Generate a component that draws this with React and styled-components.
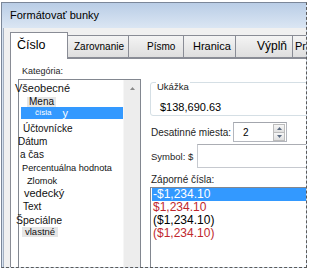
import React from 'react';
import styled, { createGlobalStyle } from 'styled-components';

const Global = createGlobalStyle`
  html, body { margin: 0; padding: 0; background: #fff; }
  body { font-family: "Liberation Sans", Arial, sans-serif; color: #000; }
`;

const Page = styled.div`
  width: 309px;
  height: 270px;
  box-sizing: border-box;
  padding: 2px 0 0 1px;
  background: #fff;
  overflow: hidden;
`;

const Frame = styled.div`
  width: 306px;
  height: 266px;
  box-sizing: border-box;
  border-left: 1px solid #7b8799;
  border-top: 1px solid #7b8799;
  border-right: 1px dashed #5a5a5a;
  border-bottom: 1px dashed #5a5a5a;
  background: #d7e3f1;
  display: flex;
  flex-direction: column;
  overflow: hidden;
`;

const TitleBar = styled.div`
  height: 25px;
  flex: none;
  padding-left: 8px;
  background: linear-gradient(#b9cde6, #dbe6f3);
  font-size: 11px;
  line-height: 25px;
  color: #000;
`;

const Body = styled.div`
  flex: 1;
  margin-left: 1px;
  border-left: 1px solid #a5b1c2;
  background: #f0f0f0;
  padding: 4px 0 0 6px;
  display: flex;
  flex-direction: column;
  min-height: 0;
`;

const TabRow = styled.div`
  display: flex;
  align-items: flex-end;
  height: 26px;
  flex: none;
`;

const Tab = styled.div`
  box-sizing: border-box;
  flex: none;
  width: ${p => p.$w}px;
  height: ${p => (p.$active ? 27 : 23)}px;
  margin-left: ${p => (p.$first ? 0 : -1)}px;
  margin-bottom: ${p => (p.$active ? -1 : 0)}px;
  border: 1px solid #898c95;
  border-bottom: ${p => (p.$active ? 'none' : '1px solid #898c95')};
  background: ${p => (p.$active ? '#fff' : 'linear-gradient(#f4f4f4, #dedede)')};
  padding-left: ${p => p.$pl}px;
  font-size: ${p => p.$size}px;
  line-height: ${p => (p.$active ? 24 : 21)}px;
  white-space: nowrap;
  overflow: hidden;
  position: relative;
  z-index: ${p => (p.$active ? 2 : 1)};
`;

const Panel = styled.div`
  flex: 1;
  background: #fff;
  border-top: 1px solid #898c95;
  border-left: 1px solid #898c95;
  display: grid;
  grid-template-columns: 139px 170px;
  align-items: start;
  min-height: 0;
`;

const LeftCol = styled.div`
  padding: 7px 0 0 7px;
`;

const SmallLabel = styled.div`
  font-size: 9px;
  line-height: 11px;
  margin-left: 4px;
  color: #1e1e1e;
`;

const ListBox = styled.div`
  margin-top: 2px;
  width: 123px;
  height: 200px;
  box-sizing: border-box;
  border: 1px solid #828790;
  display: flex;
`;

const Items = styled.div`
  flex: 1;
  min-width: 0;
`;

const Item = styled.div`
  height: ${p => p.$h}px;
  line-height: ${p => p.$h}px;
  margin-top: ${p => p.$mt || 0}px;
  margin-left: ${p => p.$x || 0}px;
  font-size: ${p => p.$size}px;
  white-space: nowrap;
  color: #111;
`;

const Chip = styled.span`
  display: inline-block;
  height: 100%;
  padding: 0 ${p => p.$pad}px;
  background: #e6e6e6;
`;

const SelItem = styled.div`
  height: 12px;
  margin-left: 2px;
  padding-left: 14px;
  background: #3399ff;
  color: #fff;
  white-space: nowrap;
  display: flex;
  align-items: center;
`;

const Tiny = styled.span`
  font-size: ${p => p.$size}px;
  margin-left: ${p => p.$ml || 0}px;
  line-height: 12px;
`;

const ScrollBar = styled.div`
  width: 17px;
  flex: none;
  background: #ededed;
  border-left: 1px solid #f6f6f6;
  display: flex;
  justify-content: center;
  padding-top: 7px;
  box-sizing: border-box;
`;

const RightCol = styled.div`
  display: flex;
  flex-direction: column;
  align-items: flex-start;
  padding-top: 23px;
`;

const Group = styled.div`
  position: relative;
  width: 170px;
  box-sizing: border-box;
  border: 1px solid #d5dfe5;
  border-radius: 3px;
  padding: 18px 0 1px 9px;
  font-size: 11px;
  line-height: 13px;
`;

const GroupLabel = styled.span`
  position: absolute;
  top: -2px;
  left: 5px;
  padding: 0 1px;
  background: #fff;
  font-size: 9.5px;
  line-height: 12px;
  color: #1e1e1e;
`;

const Row = styled.div`
  display: flex;
  align-items: center;
  margin-top: ${p => p.$mt}px;
`;

const FieldLabel = styled.span`
  font-size: ${p => p.$size}px;
  margin-left: 1px;
  white-space: nowrap;
  color: #1e1e1e;
`;

const Spinner = styled.div`
  margin-left: 2px;
  width: 54px;
  height: 20px;
  box-sizing: border-box;
  border: 1px solid #b3b6bd;
  border-top-color: #a3a6ad;
  display: flex;
  align-items: center;
  justify-content: space-between;
  padding: 0 1px 0 9px;
  font-size: 10px;
`;

const SpinButtons = styled.div`
  width: 12px;
  height: 17px;
  display: flex;
  flex-direction: column;
  gap: 0;
`;

const SpinButton = styled.div`
  flex: 1;
  border: 1px solid #bcbcbc;
  background: linear-gradient(#f7f7f7, #dfdfdf);
  display: flex;
  align-items: center;
  justify-content: center;
  box-sizing: border-box;
  & + & { margin-top: -1px; }
`;

const TextBox = styled.div`
  margin-left: 4px;
  width: 130px;
  height: 24px;
  box-sizing: border-box;
  border: 1px solid #c6c9cf;
  border-top-color: #abadb3;
`;

const NegLabel = styled.div`
  margin-top: 6px;
  margin-left: 1px;
  font-size: 10px;
  line-height: 12px;
  color: #1e1e1e;
`;

const NegList = styled.div`
  margin-top: 1px;
  width: 170px;
  height: 100px;
  box-sizing: border-box;
  border: 1px solid #828790;
  padding-left: 1px;
`;

const NegItem = styled.div`
  height: 13px;
  line-height: 13px;
  font-size: 12px;
  padding-left: 1px;
  white-space: nowrap;
  color: ${p => (p.$sel ? '#fff' : p.$red ? '#c0272d' : '#000')};
  background: ${p => (p.$sel ? '#3399ff' : 'transparent')};
`;

const Arrow = ({ up, color = '#8a8a8a', w = 5, h = 3 }) => (
  <svg width={w} height={h} viewBox="0 0 5 3" style={{ display: 'block' }}>
    <polygon points={up ? '0,3 5,3 2.5,0' : '0,0 5,0 2.5,3'} fill={color} />
  </svg>
);

const tabs = [
  { label: 'Číslo', w: 58, pl: 6, size: 12.5, active: true },
  { label: 'Zarovnanie', w: 62, pl: 6, size: 10 },
  { label: 'Písmo', w: 56, pl: 18, size: 10 },
  { label: 'Hranica', w: 53, pl: 9, size: 11 },
  { label: 'Výplň', w: 58, pl: 21, size: 12 },
  { label: 'Pr', w: 40, pl: 2, size: 11 },
];

const negatives = [
  { t: '-$1,234.10', sel: true },
  { t: '$1,234.10', red: true },
  { t: '($1,234.10)' },
  { t: '($1,234.10)', red: true },
];

export default function App() {
  return (
    <>
      <Global />
      <Page>
        <Frame>
          <TitleBar>Formátovať bunky</TitleBar>
          <Body>
            <TabRow>
              {tabs.map((t, i) => (
                <Tab key={t.label} $w={t.w} $pl={t.pl} $size={t.size} $active={t.active} $first={i === 0}>
                  {t.label}
                </Tab>
              ))}
            </TabRow>
            <Panel>
              <LeftCol>
                <SmallLabel>Kategória:</SmallLabel>
                <ListBox>
                  <Items>
                    <Item $h={16} $size={11} $x={-4}>Všeobecné</Item>
                    <Item $h={10} $mt={1} $size={10} $x={8}><Chip $pad={2}>Mena</Chip></Item>
                    <SelItem>
                      <Tiny $size={8}>čísla</Tiny>
                      <Tiny $size={11} $ml={11}>y</Tiny>
                    </SelItem>
                    <Item $h={16} $mt={2} $size={10} $x={4}>Účtovnícke</Item>
                    <Item $h={10} $size={10} $x={-1}>Dátum</Item>
                    <Item $h={13} $mt={1} $size={10} $x={1}>a čas</Item>
                    <Item $h={14} $size={9.2} $x={3}>Percentuálna hodnota</Item>
                    <Item $h={12} $size={9.2} $x={8}>Zlomok</Item>
                    <Item $h={13} $size={11} $x={5}>vedecký</Item>
                    <Item $h={14} $size={10} $x={4}>Text</Item>
                    <Item $h={12} $size={10.5} $x={-3}>Špeciálne</Item>
                    <Item $h={10} $mt={1} $size={9.5} $x={3}><Chip $pad={3}>vlastné</Chip></Item>
                  </Items>
                  <ScrollBar>
                    <Arrow up />
                  </ScrollBar>
                </ListBox>
              </LeftCol>
              <RightCol>
                <Group>
                  <GroupLabel>Ukážka</GroupLabel>
                  $138,690.63
                </Group>
                <Row $mt={6}>
                  <FieldLabel $size={10}>Desatinné miesta:</FieldLabel>
                  <Spinner>
                    <span>2</span>
                    <SpinButtons>
                      <SpinButton><Arrow up color="#5b6b82" /></SpinButton>
                      <SpinButton><Arrow color="#5b6b82" /></SpinButton>
                    </SpinButtons>
                  </Spinner>
                </Row>
                <Row $mt={2}>
                  <FieldLabel $size={9.5}>Symbol: $</FieldLabel>
                  <TextBox />
                </Row>
                <NegLabel>Záporné čísla:</NegLabel>
                <NegList>
                  {negatives.map((n, i) => (
                    <NegItem key={i} $sel={n.sel} $red={n.red}>{n.t}</NegItem>
                  ))}
                </NegList>
              </RightCol>
            </Panel>
          </Body>
        </Frame>
      </Page>
    </>
  );
}
